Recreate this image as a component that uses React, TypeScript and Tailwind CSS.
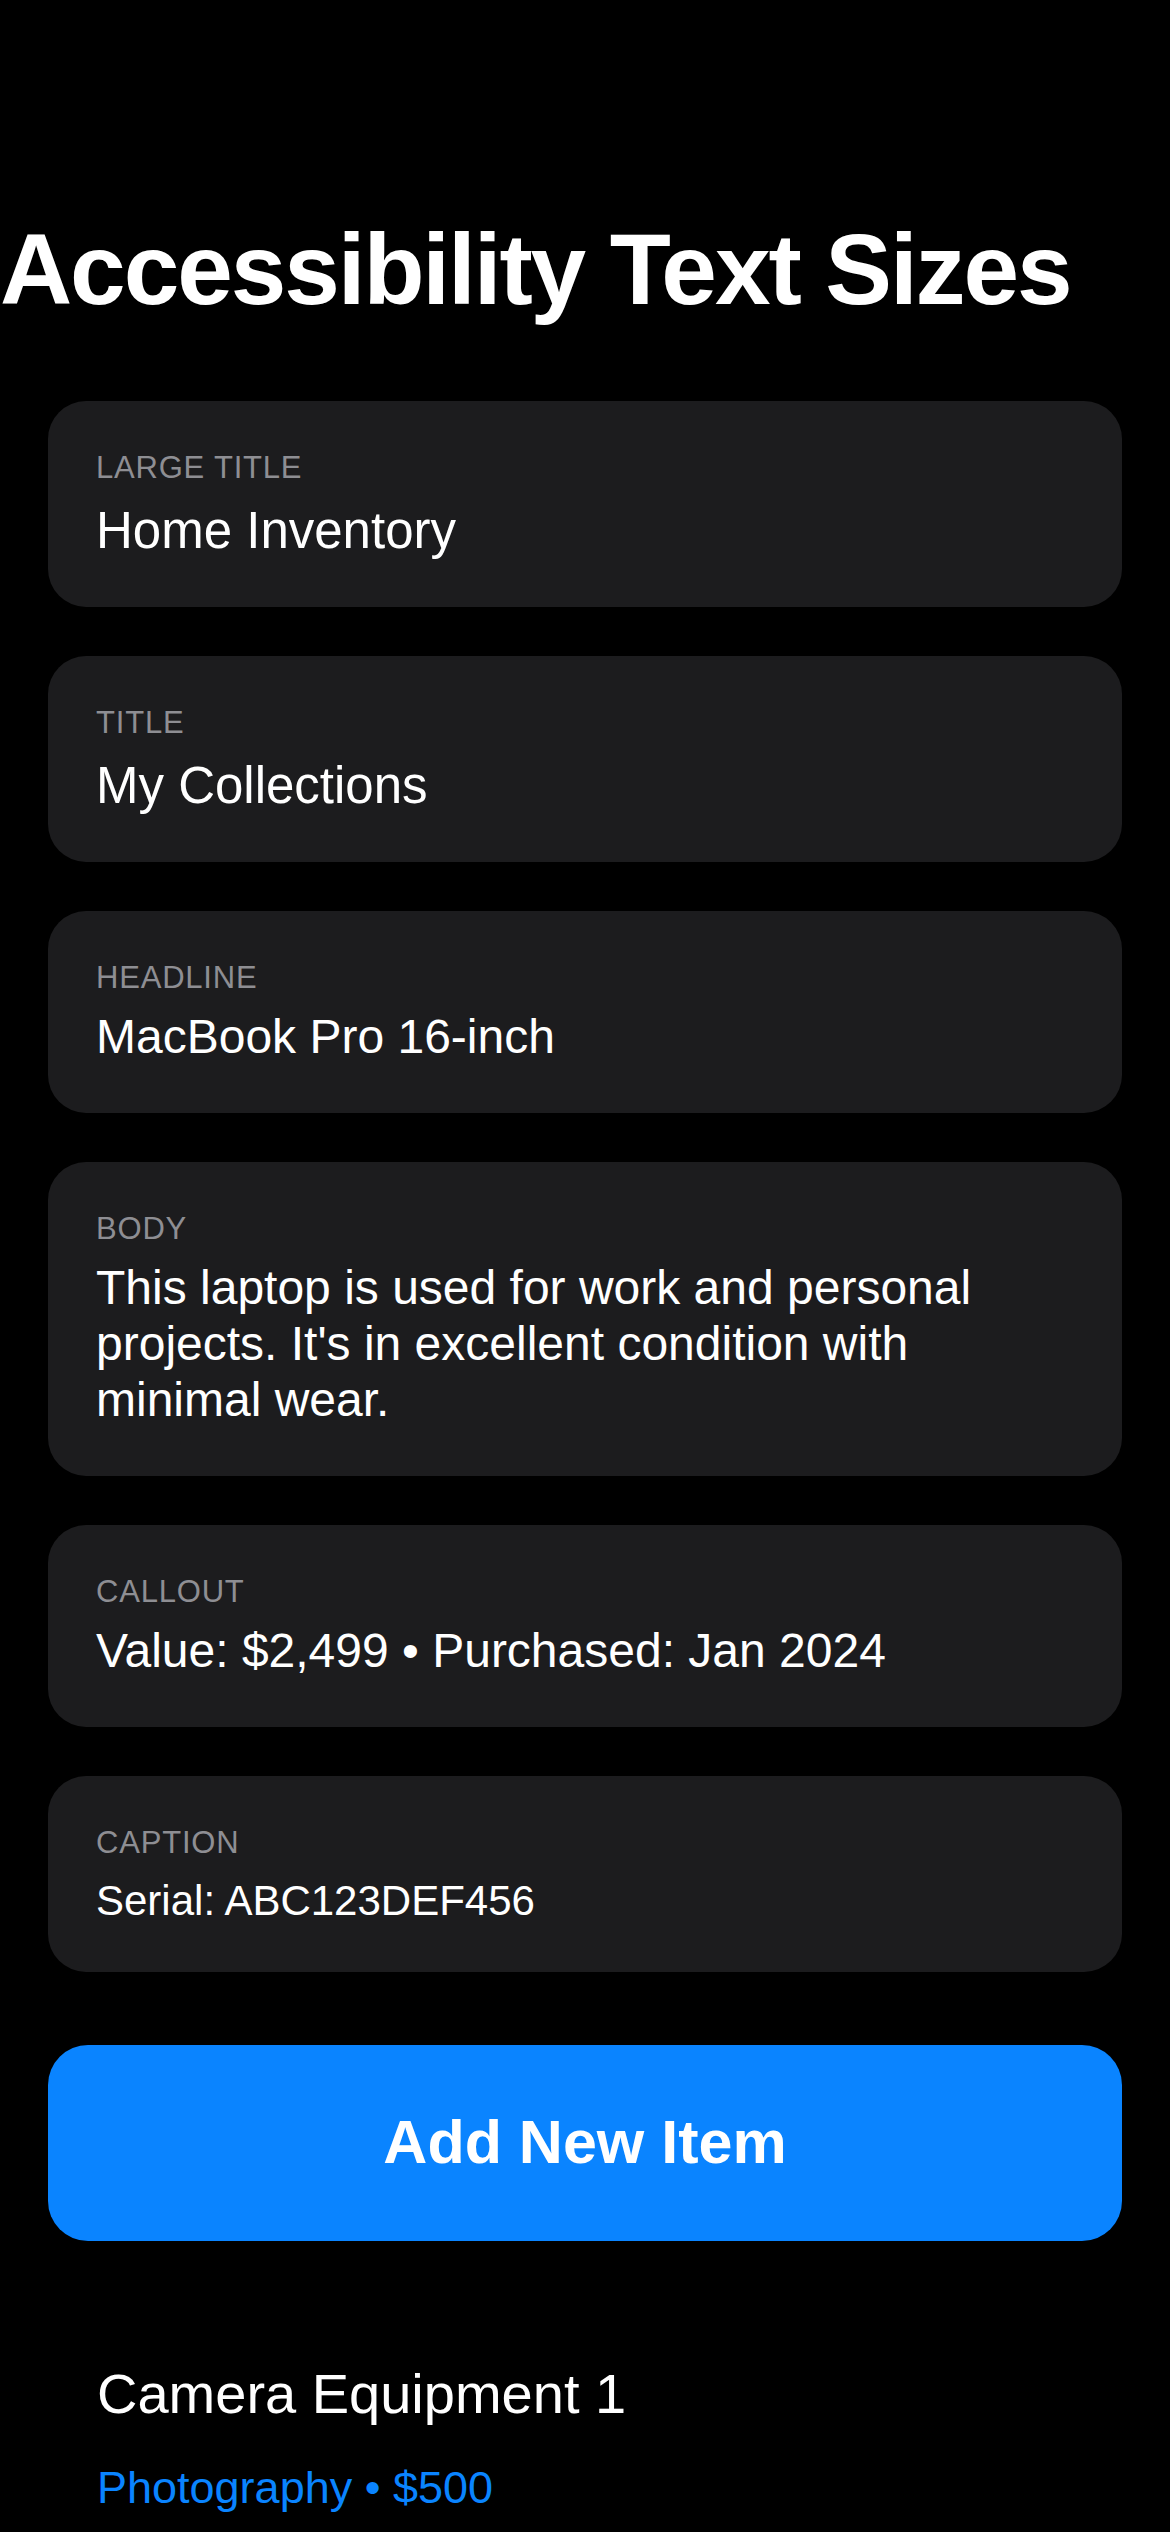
import React from 'react';

const font = { fontFamily: '"Liberation Sans", Arial, sans-serif' };

type Sample = {
  label: string;
  text: string;
  size: string;
  gap: string;
  leading: string;
};

const samples: Sample[] = [
  { label: 'Large Title', text: 'Home Inventory', size: 'text-[51px]', gap: 'mt-[17px]', leading: 'leading-[56px]' },
  { label: 'Title', text: 'My Collections', size: 'text-[51px]', gap: 'mt-[17px]', leading: 'leading-[56px]' },
  { label: 'Headline', text: 'MacBook Pro 16-inch', size: 'text-[48px]', gap: 'mt-[13px]', leading: 'leading-[56px]' },
  {
    label: 'Body',
    text: "This laptop is used for work and personal projects. It's in excellent condition with minimal wear.",
    size: 'text-[48px]',
    gap: 'mt-[13px]',
    leading: 'leading-[56px]',
  },
  { label: 'Callout', text: 'Value: $2,499 \u2022 Purchased: Jan 2024', size: 'text-[48px]', gap: 'mt-[13px]', leading: 'leading-[56px]' },
  { label: 'Caption', text: 'Serial: ABC123DEF456', size: 'text-[42px]', gap: 'mt-[17px]', leading: 'leading-[46px]' },
];

function SampleCard({ sample }: { sample: Sample }) {
  return (
    <div className="bg-[#1c1c1e] rounded-[38px] pl-[48px] pr-[56px] pt-[49px] pb-[48px]">
      <div className="text-[31px] leading-[36px] tracking-[0.8px] uppercase text-[#8e8e93]">{sample.label}</div>
      <div className={`${sample.size} ${sample.leading} ${sample.gap} text-white`}>{sample.text}</div>
    </div>
  );
}

export default function App() {
  return (
    <div className="w-[1170px] min-h-[2532px] bg-black overflow-hidden" style={font}>
      <h1 className="pt-[219px] text-[100px] leading-[100px] font-bold tracking-[-2.1px] text-white whitespace-nowrap">
        Accessibility Text Sizes
      </h1>

      <div className="mt-[82px] px-[48px] flex flex-col gap-[49px]">
        {samples.map((s) => (
          <SampleCard key={s.label} sample={s} />
        ))}
      </div>

      <div className="px-[48px] mt-[73px]">
        <button className="w-full h-[196px] rounded-[40px] bg-[#0a84ff] text-white text-[61px] font-bold flex items-center justify-center">
          Add New Item
        </button>
      </div>

      {/* item list */}
      <div className="mt-[121px] px-[97px]">
        <div className="text-[56px] leading-[64px] text-white">Camera Equipment 1</div>
        <div className="mt-[36px] text-[45px] leading-[52px] text-[#0a84ff]">Photography &bull; $500</div>
      </div>
    </div>
  );
}
